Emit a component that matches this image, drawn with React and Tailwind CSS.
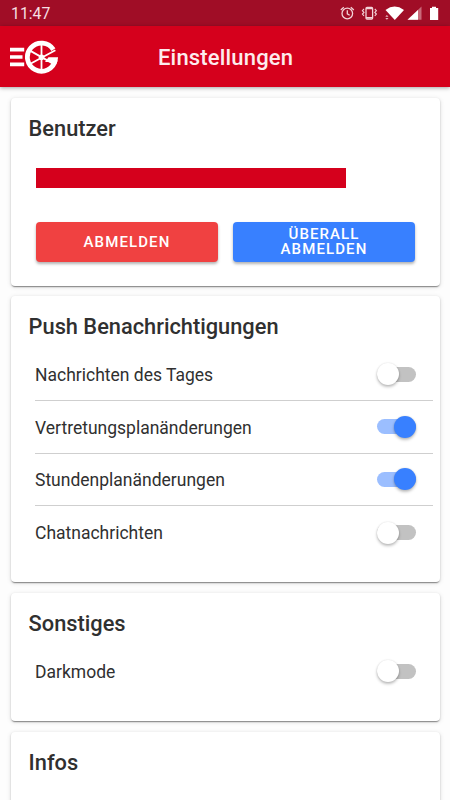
import React from "react";

function StatusBar() {
  return (
    <div className="flex h-[26px] shrink-0 items-center justify-between bg-[#a00d26] px-[11px] text-[#f6dfe3]">
      <span className="pt-[2px] text-[15.8px] leading-[24px]">11:47</span>
      <svg width="101" height="18" viewBox="338 4.5 101 18" fill="none">
        <g stroke="#f3d3d8" strokeWidth="1.3">
          <circle cx="347.3" cy="14" r="5.3" />
          <path d="M347.3 10.7v3.6l2.4 1.5M340.8 10.4l3-2.7M353.8 10.4l-3-2.7" />
          <rect x="366" y="7.9" width="6.6" height="11.6" rx="1" />
          <path d="M366 9.2h6.6M366 18.2h6.6" />
          <path d="M364 9.5l-1.6 1.7 1.6 1.7-1.6 1.7 1.6 1.7M374.8 9.5l1.6 1.7-1.6 1.7 1.6 1.7-1.6 1.7" strokeWidth="1.1" />
        </g>
        <path d="M385.5 10.4Q394.5 3.8 404 10.4L394.8 20.5Z" fill="#fff" />
        <path d="M385.3 17.2l1.6-1.8 1.6 1.8zM385.3 18.4h3.2l-1.6 1.8z" fill="#e7b9c0" />
        <path d="M407.5 20.3L421.5 7v13.3z" fill="#c96a7a" />
        <path d="M407.5 20.3L418 10.4v9.9z" fill="#fff" />
        <path d="M430 8.5h2V7.2h4v1.3h2.2v11.9H430z" fill="#fff" />
      </svg>
    </div>
  );
}

function Logo() {
  return (
    <svg width="50" height="36" viewBox="9 39 50 36" fill="none" stroke="#fff">
      <path d="M10 49.6h14.2M10 57h12.5M10 64.4h14.2" strokeWidth="3.6" />
      <path d="M53.4 49.6A14.1 14.1 0 1 0 55.3 60" strokeWidth="4.8" />
      <path d="M48.5 57.3H58.1A16.5 16.5 0 0 1 56 64.5L51.5 62H45Z" fill="#fff" stroke="none" />
      <path d="M41.5 43.5v28M29.5 50.4l23.6 13.2M29.5 64.2L55.4 50.2" strokeWidth="1.8" />
      <circle cx="41.5" cy="57.3" r="2.8" fill="#fff" stroke="none" />
    </svg>
  );
}

function Header() {
  return (
    <header className="flex h-[61px] shrink-0 items-center bg-[#d5001c] shadow-[0_1px_4px_rgba(0,0,0,0.35)]">
      <div className="ml-[9px] w-[149px]">
        <Logo />
      </div>
      <h1 className="pt-[2px] text-[22px] font-medium tracking-[0.18px] text-[#fdebed]">Einstellungen</h1>
    </header>
  );
}

function Card({ title, className, children }) {
  return (
    <section
      className={`mx-[11px] w-[429px] shrink-0 rounded bg-white pt-[17px] shadow-[0_2px_1px_-1px_rgba(0,0,0,0.3),0_1px_2px_rgba(0,0,0,0.2),0_1px_5px_rgba(0,0,0,0.12)] ${className}`}
    >
      <h2 className="pl-[17.6px] text-[21.8px] leading-[28px] font-medium text-[#303030]">{title}</h2>
      {children}
    </section>
  );
}

function Toggle({ on }) {
  return (
    <span
      role="switch"
      aria-checked={on}
      className={`flex h-[15px] w-[39px] items-center rounded-full ${on ? "justify-end bg-[#9bbeff]" : "bg-[#c2c2c2]"}`}
    >
      <span
        className={`size-[22px] shrink-0 rounded-full shadow-[0_2px_3px_rgba(0,0,0,0.25),0_0_2px_rgba(0,0,0,0.12)] ${on ? "bg-[#3880ff]" : "bg-white"}`}
      />
    </span>
  );
}

function Row({ label, on = false, last = false }) {
  return (
    <div
      className={`ml-6 mr-[7px] flex h-[52.6px] items-center justify-between pr-[17px] ${last ? "" : "border-b border-[#cfcfcf]"}`}
    >
      <span className="pt-[2px] text-[17.5px] text-[#303030]">{label}</span>
      <Toggle on={on} />
    </div>
  );
}

export default function App() {
  return (
    <div className="flex h-[800px] w-[450px] flex-col overflow-hidden bg-[#fdfdfd] font-['Roboto',sans-serif]">
      <StatusBar />
      <Header />
      <main className="flex flex-col gap-[10.5px] pt-[11px]">
        <Card title="Benutzer" className="h-[187.5px]">
          <div className="mt-[25px] ml-[24.5px] h-[20px] w-[310px] bg-[#d5001c]" />
          <div className="mt-[34px] ml-[25px] flex gap-[15px] text-[15px] leading-[15px] font-medium tracking-[1.1px] text-white">
            <button className="h-[39.5px] w-[182px] rounded bg-[#f04141] pt-px shadow-[0_2px_3px_rgba(0,0,0,0.3)]">
              ABMELDEN
            </button>
            <button className="h-[39.5px] w-[182px] rounded bg-[#3880ff] shadow-[0_2px_3px_rgba(0,0,0,0.3)]">
              ÜBERALL
              <br />
              ABMELDEN
            </button>
          </div>
        </Card>
        <Card title="Push Benachrichtigungen" className="h-[286px]">
          <div className="mt-[7.5px]">
            <Row label="Nachrichten des Tages" />
            <Row label="Vertretungsplanänderungen" on />
            <Row label="Stundenplanänderungen" on />
            <Row label="Chatnachrichten" last />
          </div>
        </Card>
        <Card title="Sonstiges" className="h-[128.5px]">
          <div className="mt-[7.5px]">
            <Row label="Darkmode" last />
          </div>
        </Card>
        <Card title="Infos" className="h-[128px]" />
      </main>
    </div>
  );
}
